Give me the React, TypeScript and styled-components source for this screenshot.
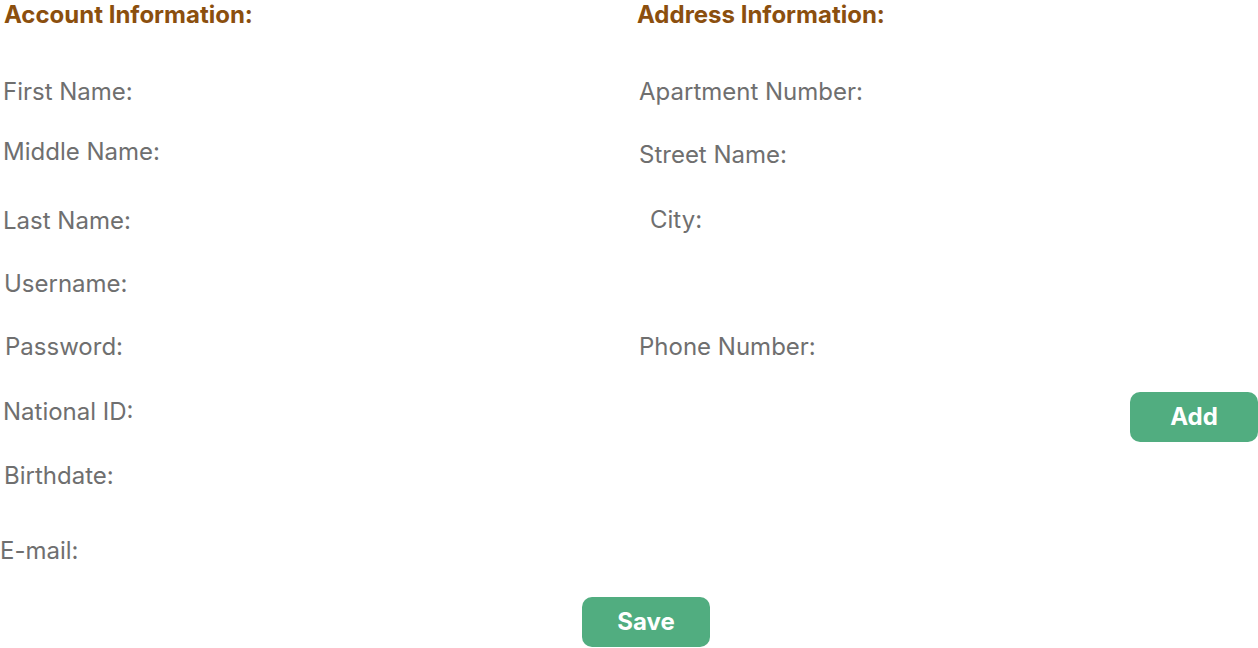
import React from "react";
import styled, { createGlobalStyle } from "styled-components";

const Global = createGlobalStyle`
  html, body { margin: 0; padding: 0; background: #ffffff; }
  body { font-family: Inter, "Noto Sans", sans-serif; }
`;

const Page = styled.div`
  width: 1258px;
  height: 648px;
  display: flex;
  flex-direction: column;
  overflow: hidden;
`;

const Columns = styled.div`
  display: grid;
  grid-template-columns: 636px 1fr;
`;

const Column = styled.section`
  display: flex;
  flex-direction: column;
  align-items: flex-start;
`;

const Heading = styled.h2<{ $x: number }>`
  margin: 0 0 0 ${(p) => p.$x}px;
  height: 30px;
  line-height: 30px;
  font-size: 24px;
  font-weight: 700;
  color: #8b4f0e;
  white-space: nowrap;
`;

const Label = styled.label<{ $top: number; $x: number }>`
  display: block;
  margin: ${(p) => p.$top}px 0 0 ${(p) => p.$x}px;
  height: 30px;
  line-height: 30px;
  font-size: 24px;
  font-weight: 400;
  color: #6f6f6f;
  white-space: nowrap;
`;

const Button = styled.button<{ $top: number }>`
  margin-top: ${(p) => p.$top}px;
  width: 128px;
  height: 50px;
  padding: 0 0 2px;
  border: none;
  border-radius: 10px;
  background: #51ad80;
  color: #ffffff;
  font-family: Inter, "Noto Sans", sans-serif;
  font-size: 24px;
  font-weight: 700;
  cursor: pointer;
`;

const AddRow = styled.div`
  align-self: stretch;
  display: flex;
  justify-content: flex-end;
`;

const Footer = styled.div`
  display: flex;
  justify-content: center;
  padding-left: 34px;
`;

const left = [
  { t: "First Name:", top: 47, x: 3 },
  { t: "Middle Name:", top: 30, x: 3 },
  { t: "Last Name:", top: 39, x: 3 },
  { t: "Username:", top: 33, x: 4 },
  { t: "Password:", top: 33, x: 5 },
  { t: "National ID:", top: 35, x: 3 },
  { t: "Birthdate:", top: 34, x: 4 },
  { t: "E-mail:", top: 45, x: 0 },
];

const right = [
  { t: "Apartment Number:", top: 47, x: 3 },
  { t: "Street Name:", top: 33, x: 3 },
  { t: "City:", top: 35, x: 14 },
  { t: "Phone Number:", top: 97, x: 3 },
];

export default function App() {
  return (
    <Page>
      <Global />
      <Columns>
        <Column>
          <Heading $x={4}>Account Information:</Heading>
          {left.map((f) => (
            <Label key={f.t} $top={f.top} $x={f.x}>
              {f.t}
            </Label>
          ))}
        </Column>
        <Column>
          <Heading $x={1}>Address Information:</Heading>
          {right.map((f) => (
            <Label key={f.t} $top={f.top} $x={f.x}>
              {f.t}
            </Label>
          ))}
          <AddRow>
            <Button $top={30}>Add</Button>
          </AddRow>
        </Column>
      </Columns>
      <Footer>
        <Button $top={31}>Save</Button>
      </Footer>
    </Page>
  );
}
